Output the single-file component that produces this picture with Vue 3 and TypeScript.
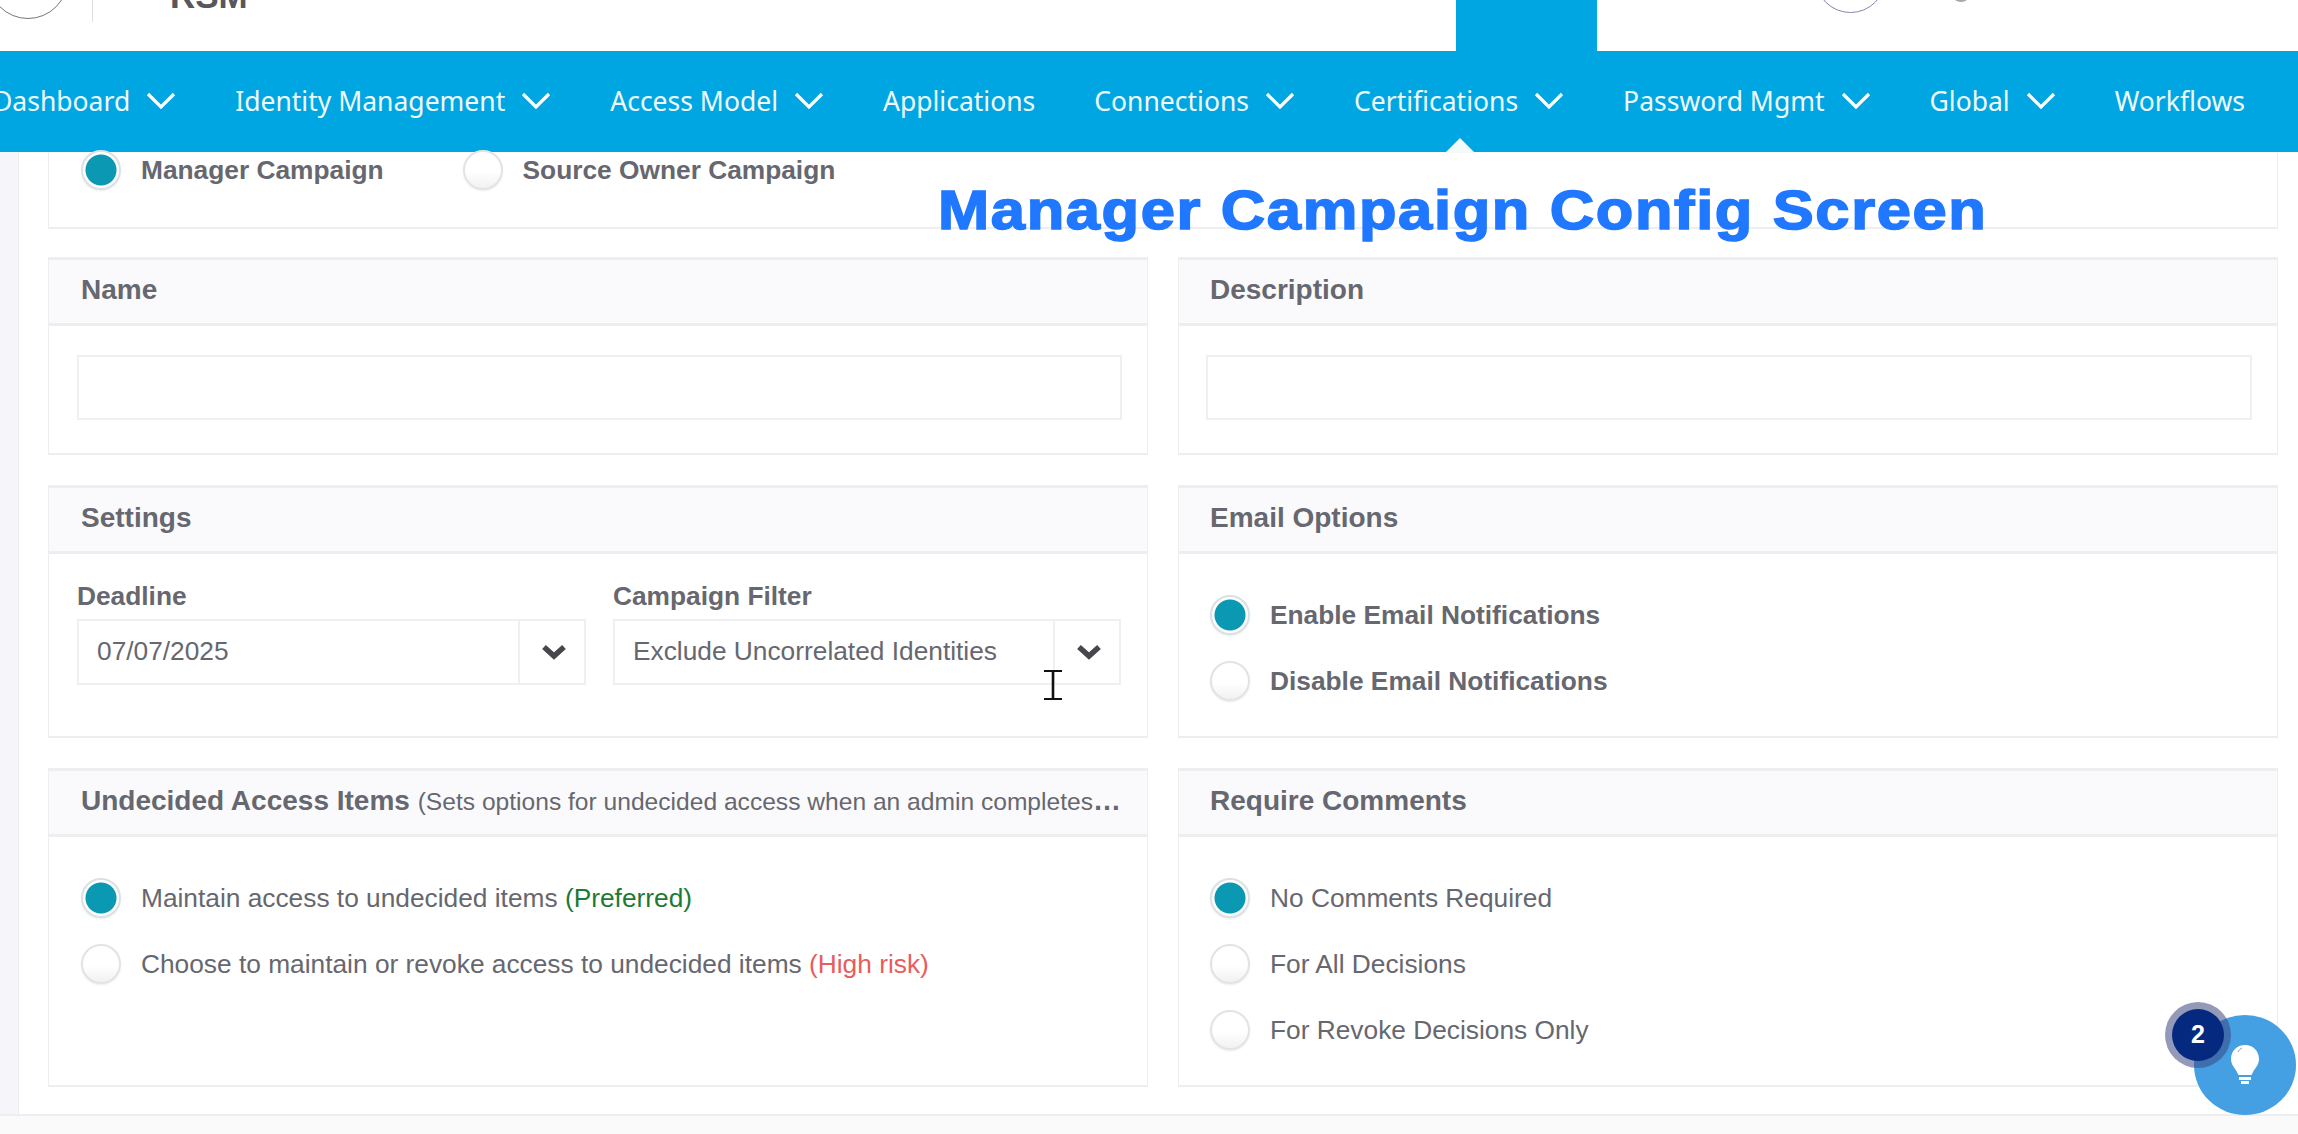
<script setup lang="ts">
interface NavItem {
  label: string
  hasMenu: boolean
}

interface RadioOption {
  label: string
  checked?: boolean
  note?: string
  noteClass?: string
}

const navItems: NavItem[] = [
  { label: 'Dashboard', hasMenu: true },
  { label: 'Identity Management', hasMenu: true },
  { label: 'Access Model', hasMenu: true },
  { label: 'Applications', hasMenu: false },
  { label: 'Connections', hasMenu: true },
  { label: 'Certifications', hasMenu: true },
  { label: 'Password Mgmt', hasMenu: true },
  { label: 'Global', hasMenu: true },
  { label: 'Workflows', hasMenu: false }
]

const emailOptions: RadioOption[] = [
  { label: 'Enable Email Notifications', checked: true },
  { label: 'Disable Email Notifications' }
]

const undecidedOptions: RadioOption[] = [
  { label: 'Maintain access to undecided items', checked: true, note: '(Preferred)', noteClass: 'good' },
  { label: 'Choose to maintain or revoke access to undecided items', note: '(High risk)', noteClass: 'risk' }
]

const commentOptions: RadioOption[] = [
  { label: 'No Comments Required', checked: true },
  { label: 'For All Decisions' },
  { label: 'For Revoke Decisions Only' }
]
</script>

<template>
  <div class="page">
    <header class="topbar">
      <span class="logo-circle"></span>
      <span class="logo-divider"></span>
      <span class="logo-text">RSM</span>
      <span class="top-tab"></span>
      <span class="avatar"></span>
      <span class="top-dot"></span>
    </header>

    <nav class="nav">
      <a v-for="item in navItems" :key="item.label" class="nav-item" :class="{ active: item.label === 'Certifications' }">
        {{ item.label }}
        <svg v-if="item.hasMenu" class="nav-chevron" viewBox="0 0 30 18">
          <path d="M2 2 L15 15 L28 2" fill="none" stroke="#fff" stroke-width="3.2" />
        </svg>
      </a>
    </nav>

    <div class="body">
      <aside class="strip"></aside>
      <main class="content">
        <section class="type-panel">
          <label class="radio bold">
            <span class="dot checked"></span>
            Manager Campaign
          </label>
          <label class="radio bold">
            <span class="dot"></span>
            Source Owner Campaign
          </label>
        </section>

        <div class="grid">
          <section class="panel">
            <h2 class="panel-head">Name</h2>
            <div class="panel-body input-body">
              <div class="text-input"></div>
            </div>
          </section>
          <section class="panel right">
            <h2 class="panel-head">Description</h2>
            <div class="panel-body input-body">
              <div class="text-input"></div>
            </div>
          </section>

          <section class="panel">
            <h2 class="panel-head">Settings</h2>
            <div class="panel-body settings-body">
              <div class="field">
                <span class="field-label">Deadline</span>
                <div class="select">
                  <span class="select-value">07/07/2025</span>
                  <span class="select-btn">
                    <svg viewBox="0 0 26 16" class="select-chevron">
                      <path d="M3 3 L13 12 L23 3" fill="none" stroke="#46464c" stroke-width="5.5" />
                    </svg>
                  </span>
                </div>
              </div>
              <div class="field">
                <span class="field-label">Campaign Filter</span>
                <div class="select">
                  <span class="select-value">Exclude Uncorrelated Identities</span>
                  <span class="select-btn">
                    <svg viewBox="0 0 26 16" class="select-chevron">
                      <path d="M3 3 L13 12 L23 3" fill="none" stroke="#46464c" stroke-width="5.5" />
                    </svg>
                  </span>
                </div>
              </div>
            </div>
          </section>
          <section class="panel right">
            <h2 class="panel-head">Email Options</h2>
            <div class="panel-body radio-list email-list">
              <label v-for="opt in emailOptions" :key="opt.label" class="radio bold">
                <span class="dot" :class="{ checked: opt.checked }"></span>
                {{ opt.label }}
              </label>
            </div>
          </section>

          <section class="panel">
            <h2 class="panel-head">
              Undecided Access Items
              <span class="head-note">(Sets options for undecided access when an admin completes the campaign with undecided items)</span>
            </h2>
            <div class="panel-body radio-list">
              <label v-for="opt in undecidedOptions" :key="opt.label" class="radio">
                <span class="dot" :class="{ checked: opt.checked }"></span>
                <span>{{ opt.label }} <span :class="opt.noteClass">{{ opt.note }}</span></span>
              </label>
            </div>
          </section>
          <section class="panel right">
            <h2 class="panel-head">Require Comments</h2>
            <div class="panel-body radio-list">
              <label v-for="opt in commentOptions" :key="opt.label" class="radio">
                <span class="dot" :class="{ checked: opt.checked }"></span>
                {{ opt.label }}
              </label>
            </div>
          </section>
        </div>
      </main>
    </div>

    <div class="caption">Manager Campaign Config Screen</div>

    <!-- text cursor from the recording -->
    <svg class="ibeam" viewBox="0 0 18 30">
      <path d="M0 1 H18 M0 29 H18" fill="none" stroke="#111" stroke-width="2" />
      <path d="M9 1 V29" fill="none" stroke="#111" stroke-width="2.6" />
    </svg>

    <button class="help">
      <svg class="bulb" viewBox="0 0 28 40">
        <path d="M14 0 C6 0 0 6 0 14 C0 20 4 23 6 27 C7 29 7 30 8 30 H20 C21 30 21 29 22 27 C24 23 28 20 28 14 C28 6 22 0 14 0 Z" fill="#fff" />
        <path d="M7 7 C8 5 9 4 11 3" fill="none" stroke="#8c98a8" stroke-width="1" />
        <path d="M8 32 H20 V35 H8 Z M10 36 H18 V39 H10 Z" fill="#fff" />
      </svg>
    </button>
    <span class="help-count">2</span>
  </div>
</template>

<style>
html,
body {
  margin: 0;
  background: #fff;
}
</style>

<style scoped>
.page {
  position: relative;
  height: 1134px;
  overflow: hidden;
  background: #fafafb;
  font-family: "Liberation Sans", Arial, sans-serif;
  color: #66676f;
}

.topbar {
  display: flex;
  align-items: flex-start;
  height: 51px;
  overflow: hidden;
  background: #fff;
}

.logo-circle {
  flex: none;
  width: 80px;
  height: 80px;
  margin: -61px 0 0 -12px;
  border: 1.5px solid #77777c;
  border-radius: 50%;
  box-sizing: border-box;
}

.logo-divider {
  flex: none;
  width: 1px;
  height: 22px;
  margin-left: 24px;
  background: #dedede;
}

.logo-text {
  flex: none;
  width: 78px;
  margin: -24px 0 0 77px;
  font-size: 35px;
  font-weight: 700;
  line-height: 40px;
  color: #57575c;
}

.top-tab {
  flex: none;
  width: 141px;
  height: 51px;
  margin-left: 1208px;
  background: #00a6e1;
}

.avatar {
  flex: none;
  width: 71px;
  height: 71px;
  margin: -58px 0 0 218px;
  border: 1.5px solid #8f82b5;
  border-radius: 50%;
  box-sizing: border-box;
}

.top-dot {
  flex: none;
  width: 20px;
  height: 20px;
  margin: -18px 0 0 65px;
  border-radius: 50%;
  background: #a5a5aa;
}

.nav {
  display: flex;
  align-items: center;
  gap: 59px;
  height: 99px;
  padding-bottom: 2px;
  margin-left: -7px;
  background: #00a6e1;
  font-family: "Noto Sans", sans-serif;
  font-size: 26.5px;
  color: #eefbff;
}

.nav-item {
  position: relative;
  display: flex;
  align-items: center;
  gap: 16px;
  white-space: nowrap;
}

.nav-item.active::after {
  content: "";
  position: absolute;
  left: 91px;
  top: 55px;
  border-left: 15px solid transparent;
  border-right: 15px solid transparent;
  border-bottom: 15px solid #f4f9fa;
}

.nav-chevron {
  width: 30px;
  height: 18px;
}

.body {
  display: flex;
  height: 962px;
  border-bottom: 2px solid #eeeef1;
}

.strip {
  flex: none;
  width: 18px;
  background: #f5f5fa;
  border-right: 1px solid #ededf2;
}

.content {
  flex: 1;
  padding: 0 20px 0 29px;
  background: #fff;
}

.type-panel {
  display: flex;
  align-items: center;
  gap: 79px;
  height: 77px;
  padding: 0 0 39px 32px;
  box-sizing: border-box;
  border: 1px solid #eeeef1;
  border-top: 0;
  border-bottom-width: 2px;
}

.grid {
  display: grid;
  grid-template-columns: 1100px 1100px;
  grid-template-rows: 198px 253px 319px;
  column-gap: 30px;
  row-gap: 30px;
  margin-top: 28px;
}

.panel {
  display: flex;
  flex-direction: column;
  min-width: 0;
  border: 1px solid #eeeef1;
  border-top: 3px solid #eeeef1;
  border-bottom-width: 2px;
  box-sizing: border-box;
  background: #fff;
}

.panel-head {
  flex: none;
  height: 66px;
  margin: 0;
  padding: 0 22px 0 32px;
  box-sizing: border-box;
  overflow: hidden;
  background: #fafafd;
  border-bottom: 3px solid #eeeef1;
  font-size: 28px;
  font-weight: 700;
  line-height: 59px;
  white-space: nowrap;
  text-overflow: ellipsis;
}

.right .panel-head {
  padding-left: 31px;
}

.head-note {
  font-size: 24.6px;
  font-weight: 400;
}

.panel-body {
  flex: 1;
}

.input-body {
  padding: 29px 25px 0 28px;
}

.right .input-body {
  padding-left: 27px;
}

.text-input {
  height: 65px;
  box-sizing: border-box;
  border: 2px solid #f0f0f2;
}

.settings-body {
  display: grid;
  grid-template-columns: 509px 508px;
  column-gap: 27px;
  padding: 27px 25px 0 28px;
}

.field {
  display: flex;
  flex-direction: column;
  min-width: 0;
}

.field-label {
  height: 38px;
  font-size: 26.3px;
  font-weight: 700;
  line-height: 30px;
}

.select {
  display: flex;
  height: 66px;
  box-sizing: border-box;
  border: 2px solid #f0f0f2;
  font-size: 26.3px;
}

.select-value {
  flex: 1;
  min-width: 0;
  padding-left: 18px;
  line-height: 60px;
  white-space: nowrap;
}

.select-btn {
  flex: none;
  display: flex;
  align-items: center;
  justify-content: center;
  width: 61px;
  padding-left: 3px;
  border-left: 2px solid #f0f0f2;
}

.select-chevron {
  width: 26px;
  height: 16px;
}

.radio-list {
  display: flex;
  flex-direction: column;
  gap: 26px;
  padding: 41px 0 0 32px;
}

.right .radio-list {
  padding-left: 31px;
}

.right .email-list {
  padding-top: 41px;
}

.radio {
  display: flex;
  align-items: center;
  gap: 20px;
  height: 40px;
  font-size: 26.3px;
  white-space: nowrap;
}

.bold {
  font-weight: 700;
}

.dot {
  flex: none;
  width: 40px;
  height: 40px;
  box-sizing: border-box;
  border: 2px solid #e3e3e6;
  border-radius: 50%;
  background: linear-gradient(#fff 55%, #f1f1f3);
  box-shadow: 0 1px 2px rgba(0, 0, 0, 0.08);
}

.dot.checked {
  border-color: #d9e1e6;
  background: radial-gradient(circle at 50% 50%, #0a98b2 0, #0a98b2 15px, #fff 16px);
}

.good {
  color: #1d7a35;
}

.risk {
  color: #e85c5c;
}

.caption {
  position: absolute;
  left: 938px;
  top: 176px;
  font-size: 56px;
  font-weight: 700;
  line-height: 68px;
  letter-spacing: 1.5px;
  color: #1f78ff;
  -webkit-text-stroke: 1.6px #1f78ff;
  white-space: nowrap;
  transform: scaleX(1.097);
  transform-origin: left center;
}

.ibeam {
  position: absolute;
  left: 1044px;
  top: 670px;
  width: 18px;
  height: 30px;
}

.help {
  position: absolute;
  left: 2194px;
  top: 1015px;
  display: flex;
  align-items: center;
  justify-content: center;
  width: 102px;
  height: 100px;
  padding: 0;
  border: 0;
  border-radius: 50%;
  background: #449fe3;
}

.bulb {
  width: 28px;
  height: 40px;
}

.help-count {
  position: absolute;
  left: 2172px;
  top: 1009px;
  width: 52px;
  height: 52px;
  border-radius: 50%;
  background: #04297f;
  box-shadow: 0 0 0 7px rgba(60, 70, 130, 0.55);
  color: #fff;
  font-size: 25px;
  font-weight: 700;
  line-height: 50px;
  text-align: center;
}
</style>
